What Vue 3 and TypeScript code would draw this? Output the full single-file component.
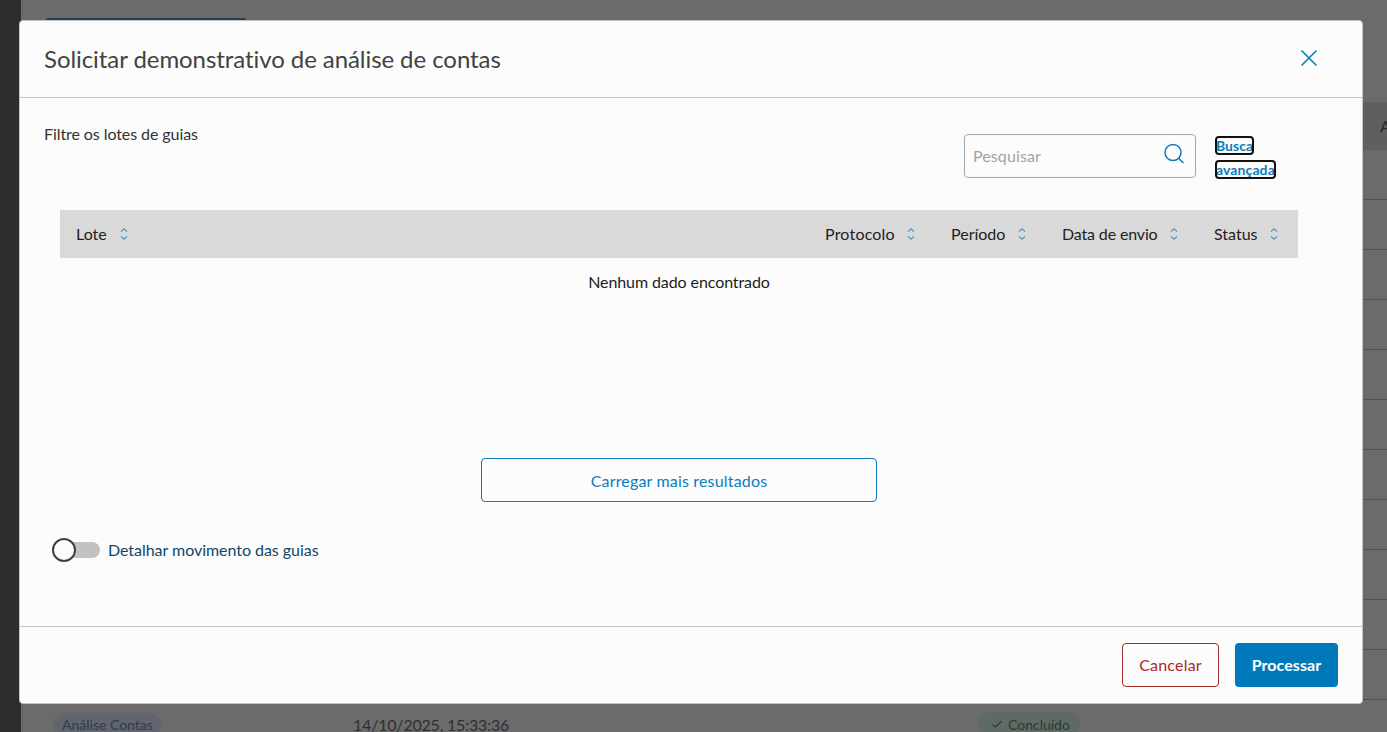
<script setup lang="ts">
const columns: string[] = ['Lote', 'Protocolo', 'Período', 'Data de envio', 'Status']
</script>

<template>
  <div class="page">
    <aside class="rail"></aside>
    <main class="content">
      <div class="top-action"></div>
      <div class="bg-head"><span>A</span></div>
      <div v-for="n in 11" :key="n" class="bg-row"></div>
      <div class="bg-last">
        <span class="pill-blue">Análise Contas</span>
        <span class="bg-date">14/10/2025, 15:33:36</span>
        <span class="pill-green">
          <svg width="12" height="12" viewBox="0 0 12 12" fill="none"><path d="M1.500 6.500 4.500 9.200 10.500 3" stroke="#2f3d35" stroke-width="1.2" /></svg>
          Concluído
        </span>
      </div>
    </main>

    <section class="modal">
      <header class="modal-head">
        <h1>Solicitar demonstrativo de análise de contas</h1>
        <svg class="close" width="18" height="18" viewBox="0 0 18 18" fill="none"><path d="M1.500 1.500 16.500 16.500M16.500 1.500 1.500 16.500" stroke="#0a7dbb" stroke-width="1.6" /></svg>
      </header>

      <div class="modal-body">
        <div class="filter-row">
          <p class="filter-label">Filtre os lotes de guias</p>
          <div class="search">
            <span class="placeholder">Pesquisar</span>
            <svg width="22" height="22" viewBox="0 0 22 22" fill="none"><circle cx="10" cy="9.500" r="8" stroke="#1178b4" stroke-width="1.500" /><path d="M15.600 15.200 20.500 20" stroke="#1178b4" stroke-width="1.500" /></svg>
          </div>
          <div class="advanced"><a>Busca</a><a>avançada</a></div>
        </div>

        <div class="table-head">
          <div v-for="c in columns" :key="c" class="th">
            <span>{{ c }}</span>
            <svg width="8" height="12" viewBox="0 0 8 12" fill="none"><path d="M1 3.600 4 .8 7 3.600M1 8.400 4 11.200 7 8.400" stroke="#3d96c9" stroke-width="1.100" /></svg>
          </div>
        </div>
        <p class="empty">Nenhum dado encontrado</p>

        <div class="more-wrap"><button class="more">Carregar mais resultados</button></div>

        <div class="toggle-row">
          <span class="track"><span class="knob"></span></span>
          <span class="toggle-label">Detalhar movimento das guias</span>
        </div>
      </div>

      <footer class="modal-foot">
        <button class="cancel">Cancelar</button>
        <button class="process">Processar</button>
      </footer>
    </section>
  </div>
</template>

<style>
html, body { margin: 0; overflow: hidden; }
</style>

<style scoped>
* { box-sizing: border-box; }
.page {
  position: relative;
  display: flex;
  width: 1387px;
  height: 732px;
  overflow: hidden;
  background: #6b6b6b;
  font-family: Lato, "Liberation Sans", sans-serif;
}
.rail { width: 21px; flex: none; background: #2d2d2d; }
.content { flex: 1; display: flex; flex-direction: column; }
.top-action {
  width: 202px; height: 30px; margin: 18px 0 54px 24px;
  flex: none; border-radius: 4px; background: #17435f;
}
.bg-head {
  height: 48px; flex: none; padding-left: 1359px;
  background: #5f5f5f; color: #2a2a2a; font-size: 16px; line-height: 48px;
  white-space: nowrap;
}
.bg-row { height: 50px; flex: none; border-bottom: 1px solid #505050; }
.bg-last {
  display: flex; align-items: flex-start; height: 32px; padding: 13px 0 0 32px;
  flex: none; font-size: 14px;
}
.pill-blue {
  height: 24px; padding: 0 10px 0 9px; width: 108px; border-radius: 12px;
  background: #61656f; color: #2e3a55; line-height: 24px; white-space: nowrap;
}
.bg-date { margin-left: 192px; width: 625px; font-size: 16px; color: #2d2f33; line-height: 24px; letter-spacing: -0.2px; }
.pill-green {
  display: flex; align-items: center; gap: 5px; height: 24px; margin-top: -1px; padding: 0 10px 0 13px;
  border-radius: 12px; background: #5f6a65; color: #2a3a32;
}
.modal {
  position: absolute; left: 19px; top: 20px;
  width: 1344px; height: 684px;
  display: flex; flex-direction: column;
  background: #fcfcfc;
  border: 1px solid #c4c4c4;
  border-radius: 4px;
}
.modal-head {
  height: 77px; flex: none;
  display: flex; align-items: center; justify-content: space-between;
  padding: 0 24px 2px;
  border-bottom: 1px solid #c4c4c4;
}
h1 { margin: 0; font-size: 24px; font-weight: 400; color: #424242; letter-spacing: -0.07px; }
.close { margin-right: 20px; }
.modal-body { flex: 1; padding: 0 24px; }
.filter-row { display: flex; align-items: flex-start; height: 112px; }
.filter-label { width: 920px; margin: 26px 0 0; font-size: 16px; line-height: 20px; color: #333; letter-spacing: -0.08px; }
.search {
  width: 232px; height: 44px; margin-top: 36px; padding: 0 10px 2px 8px;
  display: flex; align-items: center; justify-content: space-between;
  border: 1px solid #a6a6a6; border-radius: 4px;
}
.search svg { margin-top: -3px; }
.placeholder { font-size: 16px; color: #a3a3a3; letter-spacing: 0.1px; }
.advanced {
  display: flex; flex-direction: column; align-items: flex-start; gap: 7px;
  width: 62px; margin: 39px 0 0 20px;
  font-size: 14px; font-weight: 700; line-height: 17px; color: #0a7dbb;
}
.advanced a { display: block; height: 17px; outline: 2px solid #111; outline-offset: -1px; border-radius: 3px; white-space: nowrap; }
.advanced a:last-child { letter-spacing: 0.1px; }
.table-head {
  display: grid; grid-template-columns: 749px 126px 111px 152px 100px;
  width: 1238px; height: 48px; margin-left: 16px;
  background: #d9d9d9;
}
.th {
  display: flex; align-items: center; gap: 12px; padding-left: 16px;
  font-size: 16px; color: #222;
}
.th span { margin-bottom: 2px; }
.th:nth-child(1) { gap: 13px; }
.th:nth-child(3) { gap: 13px; }
.th:nth-child(2) span { letter-spacing: 0.2px; }
.th:nth-child(4) span { letter-spacing: -0.15px; }
.empty { margin: 14px 0 0 16px; width: 1238px; text-align: center; font-size: 16px; line-height: 20px; color: #1c1c1c; letter-spacing: -0.09px; }
.more-wrap { display: flex; justify-content: center; margin: 166px 0 0 16px; width: 1238px; }
.more {
  width: 396px; height: 44px; background: transparent;
  border: 1px solid #0a7dbb; border-radius: 4px;
  font: 400 16px Lato, sans-serif; color: #0a7dbb; letter-spacing: 0.17px;
}
.toggle-row { display: flex; align-items: center; gap: 8px; margin: 36px 0 0 8px; height: 24px; }
.track { position: relative; display: block; width: 48px; height: 16px; border-radius: 8px; background: #c2c2c2; }
.knob {
  position: absolute; left: 0; top: -4px; width: 24px; height: 24px;
  border-radius: 50%; border: 2px solid #404040; background: #fcfcfc;
}
.toggle-label { font-size: 16px; color: #0f4668; letter-spacing: -0.04px; margin-bottom: 2px; }
.modal-foot {
  height: 77px; flex: none;
  display: flex; justify-content: flex-end; align-items: flex-start; gap: 16px;
  padding: 16px 24px 0;
  border-top: 1px solid #c4c4c4;
}
.modal-foot button { height: 44px; padding: 0 0 2px; border-radius: 4px; font: 400 16px Lato, sans-serif; }
.cancel { width: 97px; background: transparent; border: 1px solid #a82a25; color: #a82a25; letter-spacing: 0.2px; }
.modal-foot .process { width: 103px; background: #0079bb; border: 0; color: #fff; font-weight: 700; letter-spacing: 0.08px; }
</style>
